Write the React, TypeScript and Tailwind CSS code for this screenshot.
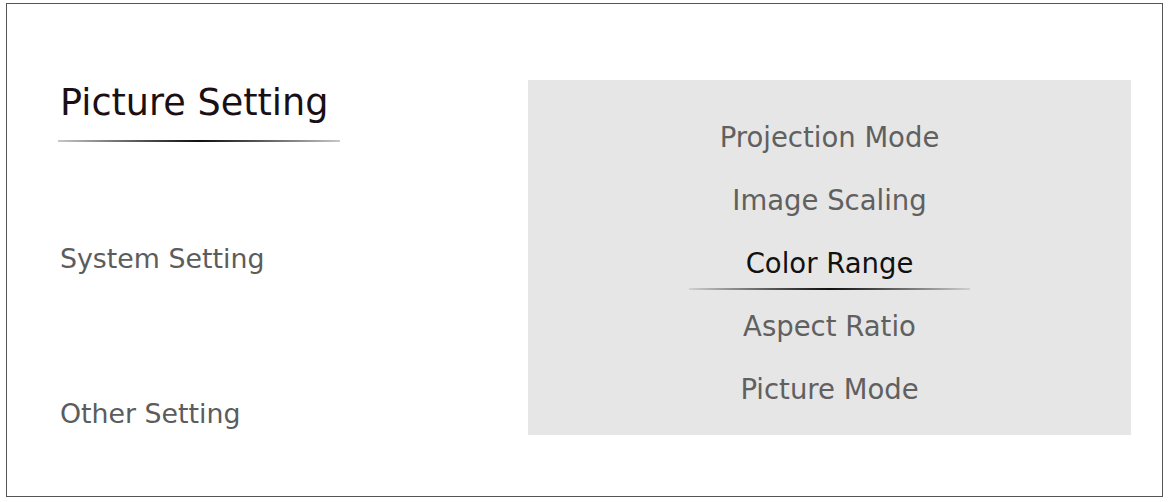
const items = ["Projection Mode", "Image Scaling", "Color Range", "Aspect Ratio", "Picture Mode"];
const active = "Color Range";

export default function App() {
  return (
    <div className="w-[1168px] h-[502px] bg-white pt-[3px] pl-[6px] font-['DejaVu_Sans',sans-serif]">
      <div className="w-[1157px] h-[494px] border border-[#555] flex">
        {/* left nav */}
        <div className="w-[521px] pl-[53px] flex flex-col">
          <div className="mt-[77px] h-[44px] flex items-center text-[36.6px] text-[#1a1014] leading-none">
            Picture Setting
          </div>
          <div className="mt-[15px] ml-[-2px] w-[282px] h-[2px] bg-gradient-to-r from-[#c8c8c8] via-[#111] to-[#c8c8c8]" />
          <div className="mt-[101px] h-[32px] flex items-center text-[26.8px] text-[#5c5c5c] leading-none">
            System Setting
          </div>
          <div className="mt-[123px] h-[32px] flex items-center text-[26.8px] text-[#5c5c5c] leading-none">
            Other Setting
          </div>
        </div>
        {/* options panel */}
        <div className="mt-[76px] w-[603px] h-[355px] bg-[#e6e6e6] pt-[26px] flex flex-col">
          {items.map((it) => (
            <div key={it} className="relative h-[63px] flex items-center justify-center">
              <span
                className={
                  it === active
                    ? "text-[27.5px] leading-none text-[#111]"
                    : "text-[27.5px] leading-none text-[#606060]"
                }
              >
                {it}
              </span>
              {it === active && (
                <div className="absolute bottom-[5px] left-[161px] w-[281px] h-[2px] bg-gradient-to-r from-[#d0d0d0] via-[#111] to-[#d0d0d0]" />
              )}
            </div>
          ))}
        </div>
      </div>
    </div>
  );
}
